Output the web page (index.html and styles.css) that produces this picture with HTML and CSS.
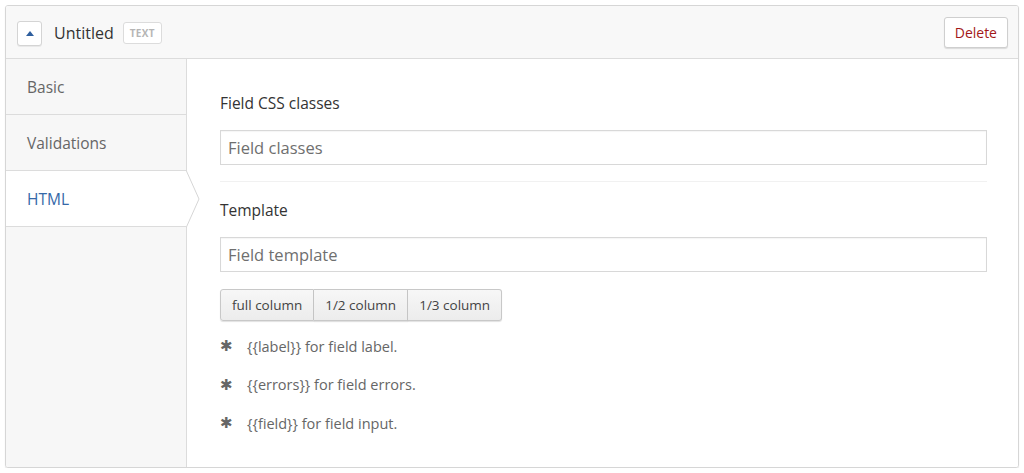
FILE: index.html
```html
<!DOCTYPE html>
<html>
<head>
<meta charset="utf-8">
<link rel="stylesheet" href="styles.css">
</head>
<body>
<div class="card">
  <div class="card-header">
    <button class="toggle" type="button" aria-label="Collapse">
      <svg width="8" height="6" viewBox="0 0 8 6"><path d="M0 6 L4 1 L8 6 Z" fill="#2e5f9e"/></svg>
    </button>
    <span class="title">Untitled</span>
    <span class="badge">TEXT</span>
    <span class="spacer"></span>
    <button class="delete" type="button">Delete</button>
  </div>
  <div class="card-body">
    <nav class="sidebar">
      <div class="tab">Basic</div>
      <div class="tab">Validations</div>
      <div class="tab active">HTML
        <svg class="tab-arrow" width="14" height="58" viewBox="0 0 14 58"><path d="M0 0 L13 29 L0 58" fill="#fff" stroke="#d6d6d6" stroke-width="1"/></svg>
      </div>
      <div class="filler"></div>
    </nav>
    <main class="content">
      <div class="group">
        <label class="label">Field CSS classes</label>
        <input class="input" type="text" placeholder="Field classes">
      </div>
      <div class="group second">
        <label class="label">Template</label>
        <input class="input" type="text" placeholder="Field template">
        <div class="btn-group">
          <button class="seg" type="button">full column</button>
          <button class="seg" type="button">1/2 column</button>
          <button class="seg" type="button">1/3 column</button>
        </div>
        <ul class="hints">
          <li><span class="star">&#x2731;</span>{{label}} for field label.</li>
          <li><span class="star">&#x2731;</span>{{errors}} for field errors.</li>
          <li><span class="star">&#x2731;</span>{{field}} for field input.</li>
        </ul>
      </div>
    </main>
  </div>
</div>
</body>
</html>
```
FILE: styles.css
```css
html, body {
  margin: 0;
  padding: 0;
  background: #fff;
}
body {
  padding: 5px 5px 0 5px;
  font-family: "Open Sans", "Noto Sans", sans-serif;
  color: #333;
}
.card {
  width: 1012px;
  height: 461px;
  border: 1px solid #d6d6d6;
  border-radius: 3px;
  box-shadow: 0 1px 1px rgba(0,0,0,0.12);
  display: flex;
  flex-direction: column;
  overflow: hidden;
  box-sizing: content-box;
}
.card-header {
  height: 52px;
  background: #f8f8f8;
  border-bottom: 1px solid #dcdcdc;
  display: flex;
  align-items: center;
  padding: 0 10px 0 11px;
  flex: none;
}
.toggle {
  width: 25px;
  height: 25px;
  padding: 0;
  margin: 2px 0 0 0;
  background: #fff;
  border: 1px solid #d4d4d4;
  border-radius: 3px;
  box-shadow: 0 1px 0 rgba(0,0,0,0.06);
  display: flex;
  align-items: center;
  justify-content: center;
}
.title {
  font-size: 16px;
  color: #333;
  margin-left: 12px;
  margin-top: 1px;
}
.badge {
  margin-left: 9px;
  margin-top: 2px;
  height: 20px;
  padding: 0 6px;
  border: 1px solid #dcdcdc;
  border-radius: 3px;
  font-size: 10px;
  font-weight: 700;
  color: #b5b5b5;
  line-height: 20px;
  letter-spacing: 0.3px;
  background: #fff;
}
.spacer { flex: 1; }
.delete {
  height: 31px;
  padding: 0 10px;
  background: #fff;
  border: 1px solid #cfcfcf;
  border-radius: 3px;
  box-shadow: 0 1px 1px rgba(0,0,0,0.12);
  color: #a31818;
  font-family: "Open Sans", "Noto Sans", sans-serif;
  font-size: 14px;
}
.card-body {
  flex: 1;
  display: flex;
}
.sidebar {
  width: 181px;
  flex: none;
  display: flex;
  flex-direction: column;
  background: #f7f7f7;
}
.tab {
  height: 55px;
  border-bottom: 1px solid #dcdcdc;
  border-right: 1px solid #dcdcdc;
  padding-left: 21px;
  display: flex;
  align-items: center;
  font-size: 15.5px;
  color: #666;
  position: relative;
}
.tab.active {
  background: #fff;
  color: #3568a8;
  border-right-color: transparent;
}
.tab-arrow {
  position: absolute;
  right: -14px;
  top: -1px;
  z-index: 2;
}
.filler {
  flex: 1;
  border-right: 1px solid #dcdcdc;
}
.content {
  flex: 1;
  padding: 32px 31px 0 33px;
  background: #fff;
}
.group {
  display: flex;
  flex-direction: column;
}
.label {
  font-size: 15.5px;
  color: #333;
  line-height: 24px;
  margin-bottom: 15px;
}
.input {
  height: 35px;
  box-sizing: border-box;
  border: 1px solid #d8d8d8;
  box-shadow: inset 0 1px 1px rgba(0,0,0,0.04);
  padding: 0 7px;
  font-family: "Open Sans", "Noto Sans", sans-serif;
  font-size: 16.5px;
  color: #333;
  outline: none;
}
.input::placeholder {
  color: #6f6f6f;
}
.group:first-child {
  padding-bottom: 16px;
  border-bottom: 1px solid #f1f1f1;
}
.group.second {
  padding-top: 16px;
}
.btn-group {
  display: flex;
  margin-top: 17px;
}
.seg {
  height: 32px;
  padding: 0 11px;
  background: linear-gradient(#f7f7f7, #ececec);
  border: 1px solid #c8c8c8;
  border-left-width: 0;
  box-shadow: 0 1px 1px rgba(0,0,0,0.12);
  font-family: "Open Sans", "Noto Sans", sans-serif;
  font-size: 13.5px;
  color: #444;
}
.seg:first-child {
  border-left-width: 1px;
  border-radius: 3px 0 0 3px;
}
.seg:last-child {
  border-radius: 0 3px 3px 0;
}
.hints {
  list-style: none;
  margin: 6px 0 0 0;
  padding: 0;
}
.hints li {
  height: 38.5px;
  display: flex;
  align-items: center;
  font-size: 14.5px;
  color: #666;
}
.star {
  width: 27px;
  padding-left: 0;
  box-sizing: border-box;
  color: #666;
  font-size: 15px;
  font-family: "DejaVu Sans", sans-serif;
}
```
